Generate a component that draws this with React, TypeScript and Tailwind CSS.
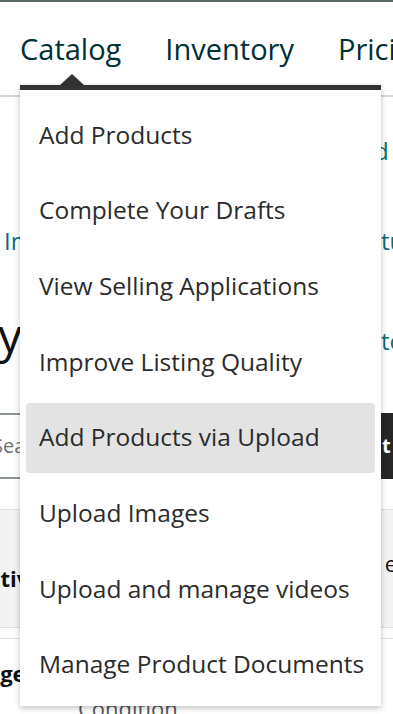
import React from "react";

const items = [
  "Add Products",
  "Complete Your Drafts",
  "View Selling Applications",
  "Improve Listing Quality",
  "Add Products via Upload",
  "Upload Images",
  "Upload and manage videos",
  "Manage Product Documents",
];

export default function App() {
  const font = { fontFamily: '"Open Sans", "Noto Sans", sans-serif' };
  return (
    <div className="relative w-[393px] h-[714px] overflow-hidden bg-white" style={font}>
      {/* Background page */}
      <div className="h-[2px] bg-[#5b6968]" />
      <div className="flex h-[93px] items-start pt-[27px] pl-[20px] gap-[44px] text-[29px] leading-[40px] text-[#002f36] whitespace-nowrap">
        <span>Catalog</span>
        <span>Inventory</span>
        <span>Pricing</span>
      </div>
      <div className="h-[2px] bg-[#d5d5d5]" />
      <div className="relative h-[316px]">
        <span className="absolute left-[374px] top-[36px] text-[24px] text-[#0a6b7c]">d</span>
        <span className="absolute left-[4px] top-[126px] text-[24px] text-[#0a6b7c]">In</span>
        <span className="absolute left-[381px] top-[126px] text-[24px] text-[#0a6b7c]">tu</span>
        <span className="absolute left-[-2px] top-[208px] text-[48px] leading-[60px] text-[#111]">y</span>
        <span className="absolute left-[381px] top-[226px] text-[24px] text-[#0a6b7c]">to</span>
      </div>
      <div className="flex h-[66px] items-stretch">
        <div className="flex-1 border-y-[2px] border-[#8d9596] flex items-center text-[20px] text-[#6f7373]">
          <span className="ml-[-8px]">Search</span>
        </div>
        <div className="w-[12px] bg-[#262626] flex items-center text-white font-bold text-[20px] pl-[1px]">t</div>
      </div>
      <div className="h-[30px]" />
      <div className="h-[119px] bg-[#f3f3f3] border-y border-[#e0e0e0] flex items-center justify-between text-[22px] font-bold text-[#0f1111] pt-[20px]">
        <span className="ml-[-26px]">Active</span>
        <span className="mr-[-4px] font-normal mt-[-30px]">e</span>
      </div>
      <div className="h-[10px]" />
      <div className="h-[70px] border-t border-[#e3e3e3] flex items-center text-[22px] font-bold text-[#0f1111]">
        <span className="ml-[-42px]">Image</span>
      </div>
      <div className="absolute left-[78px] top-[692px] text-[22px] text-[#565959]">Condition</div>

      {/* Dropdown overlay */}
      <div className="absolute left-[60px] top-[74px] w-0 h-0 border-x-[12px] border-x-transparent border-b-[11px] border-b-[#333]" />
      <div className="absolute left-[20px] top-[85px] w-[361px] h-[621px] bg-white border-t-[5px] border-[#333] shadow-[0_2px_6px_rgba(0,0,0,0.25)] flex flex-col px-[6px] pt-[10px]">
        {items.map((t, i) => (
          <div
            key={t}
            className={
              "h-[70px] shrink-0 flex items-center pl-[13px] rounded-[4px] text-[24.5px] text-[#2b2b2b] mb-[5.7px] " +
              (i === 4 ? "bg-[#e3e3e3]" : "")
            }
          >
            {t}
          </div>
        ))}
      </div>
    </div>
  );
}
